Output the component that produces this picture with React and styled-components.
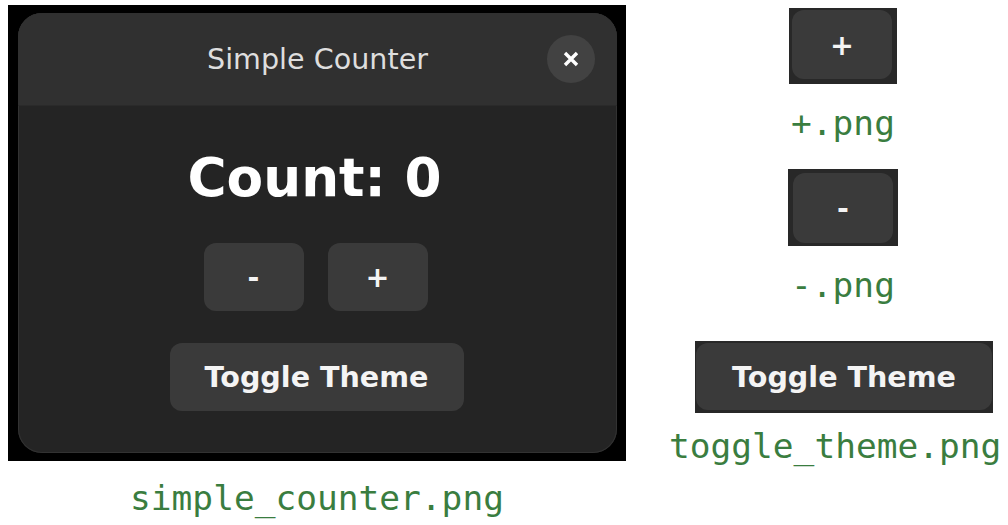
import React from "react";
import styled, { createGlobalStyle } from "styled-components";

const GlobalStyle = createGlobalStyle`
	html, body {
		margin: 0;
		padding: 0;
		background: #fff;
	}
`;

const Page = styled.div`
	display: flex;
	width: 1008px;
	height: 525px;
	overflow: hidden;
`;

const LeftColumn = styled.div`
	display: flex;
	flex: none;
	flex-direction: column;
	align-items: center;
	width: 618px;
	margin-left: 8px;
	padding-top: 5px;
`;

const RightColumn = styled.div`
	display: flex;
	flex: none;
	flex-direction: column;
	align-items: center;
	width: 348px;
	margin-left: 43px;
	padding-top: 8px;
`;

const Shot = styled.div`
	background: #000;
	width: 618px;
	height: 456px;
	padding: 8px 9px 8px 10px;
	box-sizing: border-box;
`;

const Window = styled.div`
	height: 100%;
	border-radius: 24px;
	background: #242424;
	box-shadow: inset 0 0 0 1px #323232;
	overflow: hidden;
	display: flex;
	flex-direction: column;
	align-items: center;
	font-family: "DejaVu Sans", sans-serif;
`;

const Header = styled.div`
	position: relative;
	align-self: stretch;
	height: 92px;
	flex: none;
	background: #303030;
	border-bottom: 1px solid #2a2a2a;
	display: flex;
	align-items: center;
	justify-content: center;
	color: #dedede;
	font-size: 28.6px;
`;

const CloseButton = styled.div`
	position: absolute;
	right: 22px;
	top: 22px;
	width: 48px;
	height: 48px;
	border-radius: 50%;
	background: #424242;
	display: flex;
	align-items: center;
	justify-content: center;
`;

const Count = styled.div`
	margin-top: 37px;
	margin-right: 6px;
	height: 70px;
	line-height: 70px;
	font-size: 53.3px;
	font-weight: bold;
	color: #fff;
`;

const ButtonRow = styled.div`
	display: flex;
	gap: 24px;
	margin-top: 30px;
	margin-right: 4px;
`;

const Button = styled.div`
	display: flex;
	align-items: center;
	justify-content: center;
	box-sizing: border-box;
	width: ${(p) => p.$w}px;
	height: 68px;
	border-radius: 12px;
	background: #3a3a3a;
	color: #f4f4f4;
	font-size: 28.6px;
	font-weight: bold;
	font-family: "DejaVu Sans", sans-serif;
	white-space: nowrap;
`;

const ToggleWrap = styled.div`
	margin-top: 32px;
	margin-right: 2px;
`;

const Crop = styled.div`
	box-sizing: border-box;
	width: ${(p) => p.$w}px;
	height: ${(p) => p.$h}px;
	background: #282828;
	padding: ${(p) => p.$pad};
	margin-top: ${(p) => p.$top || 0}px;
	margin-left: ${(p) => p.$left || 0}px;
`;

const CropInner = styled(Button)`
	width: 100%;
	height: 100%;
`;

const Label = styled.div`
	font-family: "DejaVu Sans Mono", monospace;
	font-size: 34.5px;
	line-height: 40px;
	color: #3a7d3f;
	white-space: nowrap;
	margin-top: ${(p) => p.$top}px;
	align-self: ${(p) => p.$align || "center"};
`;

function CloseIcon() {
	return (
		<svg width='18' height='18' viewBox='0 0 18 18'>
			<path d='M3 3 L15 15 M15 3 L3 15' stroke='#fff' strokeWidth='3.4' />
		</svg>
	);
}

export default function App() {
	return (
		<Page>
			<GlobalStyle />
			<LeftColumn>
				<Shot>
					<Window>
						<Header>
							Simple Counter
							<CloseButton>
								<CloseIcon />
							</CloseButton>
						</Header>
						<Count>Count: 0</Count>
						<ButtonRow>
							<Button $w={100}>-</Button>
							<Button $w={100}>+</Button>
						</ButtonRow>
						<ToggleWrap>
							<Button $w={294}>Toggle Theme</Button>
						</ToggleWrap>
					</Window>
				</Shot>
				<Label $top={17}>simple_counter.png</Label>
			</LeftColumn>
			<RightColumn>
				<Crop $w={108} $h={76} $pad='2px 5px 5px 3px'>
					<CropInner>+</CropInner>
				</Crop>
				<Label $top={19}>+.png</Label>
				<Crop $w={110} $h={77} $pad='4px 5px 3px 5px' $top={26}>
					<CropInner>-</CropInner>
				</Crop>
				<Label $top={19}>-.png</Label>
				<Crop $w={298} $h={72} $pad='2px 1px 3px 1px' $top={36} $left={2}>
					<CropInner>Toggle Theme</CropInner>
				</Crop>
				<Label $top={13} $align='flex-start'>
					toggle_theme.png
				</Label>
			</RightColumn>
		</Page>
	);
}
